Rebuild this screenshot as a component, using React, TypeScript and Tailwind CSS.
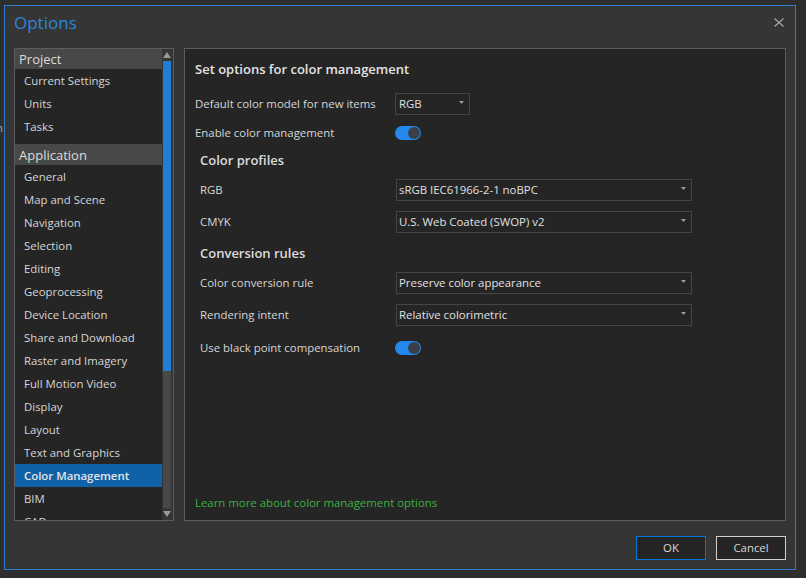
const font = "font-['Open_Sans','Noto_Sans',sans-serif]";

function Chevron() {
  return (
    <svg width="5" height="3" viewBox="0 0 5 3" className="mb-[3px] shrink-0">
      <path d="M0 0h5L2.5 3z" fill="#9a9a9a" />
    </svg>
  );
}

function Toggle() {
  return (
    <div className="flex h-[14px] w-[26px] items-center justify-end rounded-full bg-[#2389ec] pr-px">
      <div className="h-3 w-3 rounded-full bg-[#3b3f46]" />
    </div>
  );
}

function Select({ value, className }: { value: string; className: string }) {
  return (
    <div
      className={`flex h-[22px] items-center justify-between border border-[#444444] pr-[5px] text-[#e0e0e0] ${className}`}
    >
      <span>{value}</span>
      <Chevron />
    </div>
  );
}

function NavItem({ label, active }: { label: string; active?: boolean }) {
  return (
    <div
      className={`flex h-[23px] shrink-0 items-center pl-[9px] ${
        active ? "bg-[#0f62a8] font-semibold text-[#e4e4e4]" : "text-[#d6d6d6]"
      }`}
    >
      {label}
    </div>
  );
}

function NavHeader({ label, className }: { label: string; className: string }) {
  return (
    <div className={`flex shrink-0 items-center bg-[#484848] pl-[4px] pt-[2px] text-[13px] text-[#dcdcdc] ${className}`}>
      {label}
    </div>
  );
}

const projectItems = ["Current Settings", "Units", "Tasks"];
const appItems = [
  "General",
  "Map and Scene",
  "Navigation",
  "Selection",
  "Editing",
  "Geoprocessing",
  "Device Location",
  "Share and Download",
  "Raster and Imagery",
  "Full Motion Video",
  "Display",
  "Layout",
  "Text and Graphics",
];

export default function App() {
  return (
    <div className={`${font} relative h-[578px] w-[806px] overflow-hidden bg-[#2e2e2e] pb-2 pl-1 pr-[10px] pt-[5px] text-[11.4px]`}>
      <span className="absolute left-[-4px] top-[119px] text-[#b0b0b0]">n</span>
      <div className="relative flex h-full flex-col border border-[#2b7fcb] bg-[#353535] px-[9px]">
        <div className="flex h-[42px] shrink-0 items-start justify-between">
          <span className="mt-[5px] text-[17px] leading-[23px] text-[#2a86dc]">Options</span>
          <svg width="10" height="9" viewBox="0 0 10 9" className="mr-[2px] mt-[12px]">
            <path d="M0.5 0.5l9 8M9.5 0.5l-9 8" stroke="#a8a8a8" strokeWidth="1.2" />
          </svg>
        </div>

        <div className="flex h-[473px] shrink-0 gap-[10px]">
          <div className="flex w-[160px] shrink-0 border border-[#5c5c5c] bg-[#252525]">
            <div className="flex min-w-0 flex-1 flex-col overflow-hidden">
              <NavHeader label="Project" className="h-[20px]" />
              {projectItems.map((item) => (
                <NavItem key={item} label={item} />
              ))}
              <div className="h-[6px] shrink-0" />
              <NavHeader label="Application" className="h-[21px]" />
              {appItems.map((item) => (
                <NavItem key={item} label={item} />
              ))}
              <NavItem label="Color Management" active />
              <NavItem label="BIM" />
              <NavItem label="CAD" />
            </div>
            <div className="flex w-[11px] shrink-0 flex-col bg-[#353535] pl-px pr-[2px]">
              <svg width="8" height="6" viewBox="0 0 8 6" className="my-[3px] shrink-0">
                <path d="M4 0l4 6H0z" fill="#9a9a9a" />
              </svg>
              <div className="h-[310px] w-[8px] shrink-0 bg-[#1f7ed6]" />
              <div className="w-[8px] flex-1 bg-[#484848]" />
              <svg width="8" height="6" viewBox="0 0 8 6" className="my-[3px] shrink-0">
                <path d="M0 0h8L4 6z" fill="#9a9a9a" />
              </svg>
            </div>
          </div>

          <div className="flex min-w-0 flex-1 flex-col border border-[#5c5c5c] bg-[#252525] pl-[10px] text-[#d6d6d6]">
            <div className="mt-[10px] text-[13px] font-semibold leading-[20px] text-[#e4e4e4]">
              Set options for color management
            </div>
            <div className="mt-[14px] flex h-[22px] items-center">
              <span className="w-[200px]">Default color model for new items</span>
              <Select value="RGB" className="w-[75px] pl-[3px]" />
            </div>
            <div className="mt-[7px] flex h-[22px] items-center">
              <span className="w-[200px]">Enable color management</span>
              <Toggle />
            </div>
            <div className="flex flex-col pl-[5px]">
              <div className="mt-[6px] text-[13px] font-semibold leading-[20px] text-[#dcdcdc]">Color profiles</div>
              <div className="mt-[9px] flex h-[22px] items-center">
                <span className="w-[196px]">RGB</span>
                <Select value="sRGB IEC61966-2-1 noBPC" className="w-[296px] pl-[2px]" />
              </div>
              <div className="mt-[10px] flex h-[22px] items-center">
                <span className="w-[196px]">CMYK</span>
                <Select value="U.S. Web Coated (SWOP) v2" className="w-[296px] pl-[2px]" />
              </div>
              <div className="mt-[10px] text-[13px] font-semibold leading-[20px] text-[#dcdcdc]">Conversion rules</div>
              <div className="mt-[9px] flex h-[22px] items-center">
                <span className="w-[196px]">Color conversion rule</span>
                <Select value="Preserve color appearance" className="w-[296px] pl-[2px]" />
              </div>
              <div className="mt-[10px] flex h-[22px] items-center">
                <span className="w-[196px]">Rendering intent</span>
                <Select value="Relative colorimetric" className="w-[296px] pl-[2px]" />
              </div>
              <div className="mt-[11px] flex h-[22px] items-center">
                <span className="w-[195px]">Use black point compensation</span>
                <Toggle />
              </div>
            </div>
            <div className="mb-[9px] mt-auto text-[#3cb043]">Learn more about color management options</div>
          </div>
        </div>

        <div className="flex flex-1 items-start justify-end gap-[10px] pt-[15px]">
          <button className="h-6 w-[70px] border border-[#0a74d6] bg-[#252525] text-[#d6d6d6]">OK</button>
          <button className="h-6 w-[70px] border border-[#d0d0d0] bg-[#252525] text-[#d6d6d6]">Cancel</button>
        </div>
      </div>
    </div>
  );
}
